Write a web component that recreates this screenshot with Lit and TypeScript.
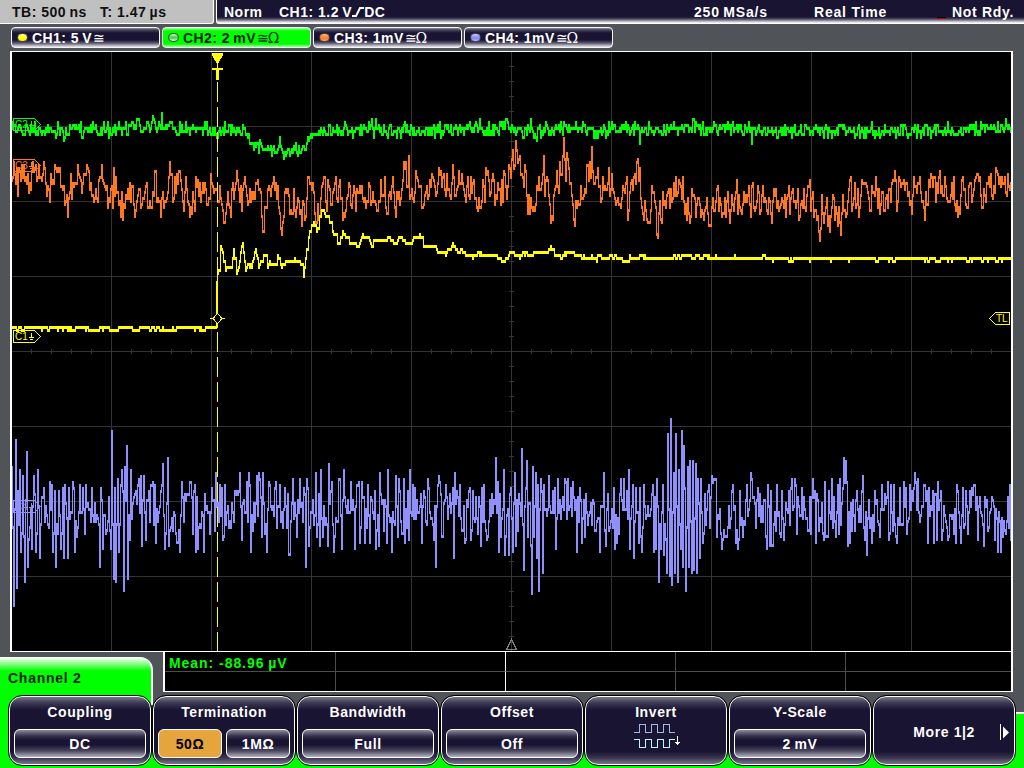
import { LitElement, css, html, svg } from "lit";
import { customElement, property } from "lit/decorators.js";
import { classMap } from "lit/directives/class-map.js";

// A block of extremes: origin in screen pixels, then x,y pairs in thirds of a pixel.
type Block = [number, number, string];

interface TraceOptions {
  base: number;
  // 0 follows the line between two extremes, 1 falls back to the base level
  pull: number;
  noise: number;
  hold: number;
  seed: number;
}

const LEFT = 12;
const RIGHT = 1011;

const CH1: Block[] = [
  [0, 90, "36,714 648,714 651,576 654,550 660,540 663,465 669,490 678,540 684,530 696,530 704,474 713,550 720,510 729,455 740,540 747,518 756,535 768,474 778,530 793,492 806,530 812,514 822,520 834,492 846,530 858,514 900,514 912,558 920,500 930,425 943,400 953,423 968,358 980,374 988,374 1000,425 1014,458"],
  [340, 90, "0,458 10,420 18,440 30,457 45,455 56,466 68,440 80,438 98,466 108,448 155,448 163,457 175,448 190,448 200,457 216,457 230,438 243,438 256,472 264,466 288,466 294,486 318,494 326,475 345,466 356,484 368,480 378,494 400,500 410,492 465,494 476,502 495,511 510,484 540,500 552,486 570,494 600,490 606,484 625,482 634,472 645,492 665,502 675,490 720,494 730,502 820,502 850,510 870,496 890,508 905,492 920,502 1018,498"],
  [680, 90, "0,502 30,493 36,502 300,505 600,506 800,505 992,506"],
];

const CH2: Block[] = [
  [0, 90, "36,118 190,122 195,145 200,118 330,118 420,106 455,112 462,85 468,115 483,112 486,66 489,112 520,118 640,118 655,145 660,118 735,118 752,155 765,160 790,178 822,166 826,190 838,170 840,138 844,172 858,198 864,175 872,198 878,175 910,172 930,140 970,128 1000,118"],
  [340, 90, "0,120 92,115 96,84 99,118 105,115 108,84 111,118 168,120 171,145 174,118 180,120 183,145 186,112 260,118 490,115 500,84 508,112 548,120 551,145 555,118 568,112 573,84 578,118 588,120 590,145 594,118 700,112 740,120 765,122 768,145 772,122 890,118 897,118 900,163 903,120 1018,116"],
  [680, 90, "0,112 214,115 217,155 220,118 334,118 337,145 340,118 442,118 445,145 448,118 550,122 584,122 587,145 590,122 720,120 723,145 726,120 992,114"],
];

const CH3: Block[] = [
  [0, 90, "38,270 42,220 50,280 57,235 66,225 78,262 91,280 100,212 110,225 115,262 133,220 148,298 156,280 169,237 178,245 190,298 200,334 210,306 213,255 226,280 234,228 246,306 252,255 264,237 276,318 288,300 296,334 308,228 320,300 330,334 348,264 360,334 375,352 384,300 400,290 409,362 420,300 432,325 440,290 447,352 456,352 468,247 475,325 492,352 507,264 516,255 519,330 541,247 550,334 560,264 567,343 585,362 590,264 604,330 615,282 624,343 636,282 645,300 654,334 660,290 666,343 678,370 684,310 693,380 701,282 713,247 720,330 738,290 744,343 758,310 774,273 788,380 798,352 805,300 828,282 840,370 849,398 858,300 870,372 882,300 888,380 894,325 903,362 912,343 917,390 927,264 936,300 945,372 953,398 960,380 968,290 978,330 985,273 996,343 1005,282 1014,334"],
  [340, 90, "0,273 6,325 12,370 17,380 29,282 37,352 45,310 49,362 60,290 70,325 78,352 87,282 93,343 108,343 117,334 123,273 132,316 147,316 159,264 165,352 175,325 186,300 195,237 201,290 207,201 210,320 222,334 231,262 240,290 253,343 264,325 276,255 290,316 300,255 310,264 318,316 330,316 343,264 345,316 354,290 368,255 378,334 386,262 390,325 403,273 408,325 421,352 432,290 444,246 455,310 462,273 470,316 475,282 490,334 497,255 503,325 507,228 516,207 520,183 524,237 528,156 538,210 543,255 552,290 558,246 566,372 575,320 579,362 585,362 596,300 610,255 613,201 617,318 621,264 630,343 637,380 648,290 651,246 657,306 661,219 666,255 672,147 678,273 682,192 688,237 693,282 700,340 705,408 711,355 720,343 725,292 735,300 741,228 747,270 756,174 762,282 768,262 774,237 786,325 790,262 800,300 807,237 811,318 817,255 822,310 831,334 843,352 855,310 862,264 865,390 870,310 882,264 888,282 891,219 900,237 905,325 913,390 918,362 925,398 936,292 945,330 951,434 960,335 963,390 972,340 978,352 987,300 990,352 995,300 1005,316 1018,273"],
  [680, 90, "0,282 9,264 12,334 18,345 27,370 33,380 36,300 50,380 54,325 68,362 73,390 81,325 85,372 93,408 99,325 108,334 114,290 118,362 132,372 140,380 144,308 150,398 156,318 162,362 170,310 180,352 195,334 204,318 213,380 216,290 225,362 234,290 243,360 248,318 262,362 270,330 275,372 285,318 300,355 306,325 318,380 327,290 330,370 340,300 348,352 354,300 360,380 374,300 380,362 387,290 393,362 400,310 407,362 417,425 423,416 427,318 433,398 440,355 450,425 456,355 465,390 470,355 480,398 486,370 491,318 500,380 507,300 514,264 517,362 525,282 530,352 540,352 547,273 560,275 572,362 580,310 589,264 600,370 607,310 612,362 624,350 631,300 648,273 651,362 660,273 673,273 685,315 697,372 704,264 712,310 722,264 733,352 741,345 749,273 760,290 770,334 777,264 784,310 795,264 808,334 822,264 828,362 838,352 849,264 860,345 870,275 880,318 888,264 900,264 904,318 918,334 927,264 940,325 954,255 965,290 975,264 980,310 985,255 991,300"],
];

const CH4: Block[] = [
  [0, 400, "37,198 42,612 48,117 51,558 60,207 63,450 69,225 75,540 81,153 85,495 96,441 102,225 108,450 114,207 120,468 132,262 156,252 159,450 169,495 183,441 189,262 192,468 195,252 204,468 207,262 222,262 225,450 240,252 276,262 301,495 304,262 309,441 333,441 338,90 342,530 345,262 348,540 354,234 357,450 366,207 372,567 375,198 381,135 384,530 393,207 423,225 426,432 433,225 456,252 467,252 470,423 489,189 495,441 504,171 507,432 541,450 546,243 585,252 589,450 612,450 636,262 666,262 669,414 720,216 747,216 753,450 771,225 777,216 789,216 801,450 807,243 828,243 840,252 870,459 879,234 901,234 918,495 923,234 927,432 949,216 960,432 963,207 984,432 987,189 998,243 1002,450 1018,234"],
  [340, 400, "0,234 6,441 14,207 33,243 45,441 51,252 75,423 85,252 90,423 105,270 108,441 117,432 122,216 141,423 144,207 157,450 168,225 177,234 192,234 195,423 207,414 210,207 219,252 246,423 253,270 265,234 289,495 294,252 339,262 342,468 345,216 360,252 375,423 387,270 423,432 426,262 434,252 441,414 456,279 469,171 477,450 492,207 495,459 507,459 513,262 519,450 525,216 529,432 546,144 553,504 561,180 576,576 579,198 588,216 591,468 594,252 597,567 603,234 609,513 612,252 627,225 648,441 654,234 675,234 685,234 699,243 711,450 720,262 781,450 794,216 798,432 825,441 831,423 843,234 853,234 867,207 870,441 879,252 882,468 890,262 906,450 912,252 948,441 951,234 957,540 963,441 969,252 972,459 981,513 985,99 990,522 993,54 997,549 1002,216 1005,513 1009,99 1014,540 1018,207"],
  [680, 400, "3,441 6,90 9,500 13,135 18,567 24,198 27,495 30,180 36,513 39,180 42,504 48,189 51,513 54,234 60,468 63,234 69,423 87,252 96,225 108,234 111,405 129,414 138,405 159,252 169,423 177,414 180,270 189,405 201,252 213,216 217,234 234,262 262,441 265,252 270,432 306,270 312,414 337,234 348,252 351,396 366,262 399,234 405,270 409,423 444,405 447,270 469,405 474,252 481,234 492,171 498,180 504,432 510,423 531,270 549,225 561,459 577,423 606,252 625,243 628,414 633,252 642,252 651,423 660,262 673,243 681,396 690,252 714,234 732,252 741,270 745,423 759,270 762,423 771,414 774,243 786,414 804,414 829,423 832,252 843,423 849,262 864,396 882,252 894,414 912,432 915,290 938,290 963,450 978,396 984,290"],
];

function random(seed: number) {
  let s = seed;
  return () => {
    s = (s * 1664525 + 1013904223) >>> 0;
    return s / 4294967296;
  };
}

function tracePath(blocks: Block[], { base, pull, noise, hold, seed }: TraceOptions) {
  const rand = random(seed);
  const keys = new Map<number, number>();
  for (const [ox, oy, text] of blocks) {
    for (const pair of text.split(" ")) {
      const [x, y] = pair.split(",").map(Number);
      keys.set(Math.floor(ox + x / 3), oy + y / 3);
    }
  }
  const xs = [...keys.keys()].sort((a, b) => a - b);
  const levels: number[] = [];
  let k = 0;
  for (let x = LEFT; x <= RIGHT; x++) {
    while (k < xs.length - 2 && xs[k + 1] <= x) k++;
    const t = Math.max(0, Math.min(1, (x - xs[k]) / (xs[k + 1] - xs[k])));
    const line = keys.get(xs[k])! * (1 - t) + keys.get(xs[k + 1])! * t;
    let y = keys.get(x);
    if (y === undefined) {
      const jitter = (rand() + rand() - 1) * noise;
      y = line * (1 - pull) + base * pull + jitter;
      // the screen holds some samples for two columns
      if (rand() < hold && levels.length && !keys.has(x - 1)) y = levels[levels.length - 1];
    }
    levels.push(base + Math.round((y - base) / 3) * 3);
  }
  let d = "";
  for (let i = 0; i < levels.length - 1; i++) {
    const top = Math.min(levels[i], levels[i + 1]);
    const bottom = Math.max(levels[i], levels[i + 1]);
    d += `M${LEFT + i} ${top - 1}h1V${bottom + 2}h-1z`;
  }
  return d;
}

const TRACES = [
  { color: "#9090fc", d: tracePath(CH4, { base: 512, pull: 0.8, noise: 36, hold: 0.06, seed: 41 }) },
  { color: "#ff7820", d: tracePath(CH3, { base: 195, pull: 0.1, noise: 20, hold: 0.06, seed: 7 }) },
  { color: "#00ff00", d: tracePath(CH2, { base: 128, pull: 0, noise: 9, hold: 0.12, seed: 19 }) },
  { color: "#ffff00", d: tracePath(CH1, { base: 327, pull: 0, noise: 2.4, hold: 0.5, seed: 3 }) },
];

const TAGS = [
  { name: "C2", y: 118, color: "#00ff00" },
  { name: "C3", y: 159, color: "#ff7820" },
  { name: "C1", y: 330, color: "#ffff00" },
  { name: "C4", y: 500, color: "#9090fc" },
];

@customElement("scope-screen")
export class ScopeScreen extends LitElement {
  static styles = css`
    :host {
      display: block;
    }

    svg {
      display: block;
      shape-rendering: crispEdges;
    }

    .grid {
      stroke: #343434;
      fill: none;
    }

    .yellow-line {
      stroke: #ffff00;
      fill: none;
    }

    .tag {
      fill: none;
    }

    text {
      font: 10px "Liberation Sans", Arial, sans-serif;
    }
  `;

  renderGrid() {
    let d = "";
    for (let x = 111; x < 1000; x += 100) d += `M${x + 0.5} 52V651`;
    for (let y = 126; y < 600; y += 75) d += `M12 ${y + 0.5}H1011`;
    for (let x = 31; x < 1010; x += 20) d += `M${x + 0.5} 349v5`;
    for (let y = 66; y < 650; y += 15) d += `M509 ${y + 0.5}h5`;
    return svg`<path class="grid" d=${d} />`;
  }

  render() {
    return html`
      <svg width="999" height="599" viewBox="12 52 999 599">
        ${this.renderGrid()}
        ${TRACES.map((trace) => svg`<path fill=${trace.color} d=${trace.d} />`)}
        ${TAGS.map(
          (tag) => svg`
            <path class="tag" stroke=${tag.color} d="M13.5 ${tag.y + 0.5}h21l6 6l-6 6h-21z" />
            <text x="15" y=${tag.y + 10} fill=${tag.color}>${tag.name}</text>
            <path class="tag" stroke=${tag.color} d="M31.5 ${tag.y + 3}v5M29 ${tag.y + 7.5}h5M30 ${tag.y + 9.5}h3" />
          `,
        )}
        <path class="yellow-line" stroke-dasharray="20 5" d="M217.5 82V651" />
        <path class="yellow-line" d="M217.5 272V328M217.5 62v8" />
        <path fill="#ffff00" d="M212 53h11v2l-5 9h-1l-5-9zM212 68h11v2h-4v10h-3v-10h-4z" />
        <path fill="#000" stroke="#ffff00" d="M217.5 313.5l4.5 5l-4.5 5l-4.5-5z" />
        <path class="yellow-line" d="M210 318.5h3M222 318.5h3" />
        <path class="yellow-line" d="M1009.5 312.5h-14l-6 6l6 6h14z" />
        <text x="996" y="322" fill="#ffff00">TL</text>
        <path fill="none" stroke="#808080" d="M511.5 639.5l5 10h-10z" />
      </svg>
    `;
  }
}

@customElement("channel-badge")
export class ChannelBadge extends LitElement {
  @property()
  label = "";

  @property()
  symbols = "";

  @property({ type: Boolean, reflect: true })
  active = false;

  @property()
  color = "yellow";

  static styles = css`
    :host {
      display: flex;
      align-items: center;
      box-sizing: border-box;
      width: 149px;
      height: 21px;
      padding-left: 5px;
      border: 1px solid #f4f4f4;
      border-radius: 4px;
      color: #fff;
      background: linear-gradient(#8e8c9c 0, #45425a 2px, #191432 5px, #191432 12px, #5a566c 15px, #e8e8ee 19px);
    }

    :host([active]) {
      color: #002000;
      background: linear-gradient(#a0ffa0 0, #00ff00 3px, #00ff00 16px, #a0ffa0 19px);
    }

    .led {
      box-sizing: border-box;
      width: 11px;
      height: 9px;
      border: 1px solid #444;
      border-radius: 5px;
      margin-right: 4px;
    }

    .yellow {
      background: linear-gradient(#ffff90, #ffff00 60%, #f0e040);
    }

    .green {
      border-color: #205020;
      background: linear-gradient(#d0f0d0, #50c850 50%, #d0f8d0);
    }

    .orange {
      background: linear-gradient(#ffb080, #ff7820 60%, #ffa060);
    }

    .blue {
      background: linear-gradient(#c8c8ff, #8080ff 60%, #b8b8ff);
    }

    .label {
      letter-spacing: 0.45px;
      white-space: pre;
    }

    .symbols {
      margin-left: 1px;
      font: 14px "DejaVu Serif", serif;
      letter-spacing: -1.2px;
    }
  `;

  render() {
    return html`
      <span class=${classMap({ led: true, [this.color]: true })}></span>
      <span class="label">${this.label}</span>
      <span class="symbols">${this.symbols}</span>
    `;
  }
}

@customElement("soft-key")
export class SoftKey extends LitElement {
  @property()
  label = "";

  @property({ type: Array })
  values: string[] = [];

  @property({ type: Number })
  selected = -1;

  static styles = css`
    :host {
      display: flex;
      flex-direction: column;
      box-sizing: border-box;
      width: 142px;
      height: 69px;
      padding: 7px 4px 6px;
      border: 1px solid #fff;
      outline: 1px solid #000;
      border-radius: 13px;
      color: #fff;
      background: linear-gradient(#77758a 0, #3c3852 6px, #191432 13px, #191432 55px, #3c3852 61px, #77758a 67px);
      text-align: center;
      letter-spacing: 0.6px;
      line-height: 16px;
    }

    .label {
      height: 16px;
    }

    .values {
      display: flex;
      gap: 4px;
      margin-top: 9px;
    }

    .value {
      flex: 1;
      box-sizing: border-box;
      height: 29px;
      padding-top: 6px;
      border: 1px solid #fff;
      border-radius: 6px;
      background: linear-gradient(#8c8a9c 0, #35314b 6px, #191432 10px, #191432 15px, #4c4860 21px, #b4b2be 27px);
      white-space: pre;
    }

    .value.selected {
      color: #000;
      background: #e6a43c;
    }
  `;

  render() {
    return html`
      <div class="label">${this.label}</div>
      ${this.values.length
        ? html`<div class="values">
            ${this.values.map(
              (value, i) => html`<div class=${classMap({ value: true, selected: i === this.selected })}>${value}</div>`,
            )}
          </div>`
        : html`<slot></slot>`}
    `;
  }
}

@customElement("app-root")
export class AppRoot extends LitElement {
  static styles = css`
    :host {
      display: flex;
      flex-direction: column;
      width: 1024px;
      height: 768px;
      overflow: hidden;
      background: #505458;
      font: bold 14px "Liberation Sans", Arial, sans-serif;
      color: #fff;
    }

    .status {
      display: flex;
      gap: 2px;
      height: 24px;
      line-height: 24px;
      letter-spacing: 0.5px;
      white-space: pre;
    }

    .timebase {
      display: grid;
      grid-template-columns: 88px auto;
      box-sizing: border-box;
      width: 214px;
      padding-left: 12px;
      border-right: 1px solid #fff;
      border-bottom: 1px solid #fff;
      border-bottom-right-radius: 3px;
      color: #101010;
      background: #c0c0c0;
    }

    .trigger {
      flex: 1;
      display: grid;
      grid-template-columns: 55px 415px 120px 123px auto;
      padding-left: 7px;
      border-left: 1px solid #fff;
      border-bottom: 1px solid #fff;
      border-bottom-left-radius: 3px;
      background: linear-gradient(#191432 17px, #4c4860 19px, #a8a6b4 21px, #fff 23px);
    }

    .wide {
      letter-spacing: 0.8px;
    }

    .edge {
      margin: 0 -1px 0 0;
    }

    .ready {
      display: flex;
      gap: 6px;
      letter-spacing: 0.7px;
    }

    .lamp {
      width: 9px;
      height: 1px;
      margin-top: 17px;
      border-top: 1px solid #000;
      background: #c00000;
    }

    .channels {
      display: flex;
      gap: 2px;
      height: 21px;
      padding: 3px 0 3px 11px;
    }

    .screen {
      width: 999px;
      height: 599px;
      margin-left: 10px;
      border: solid #fff;
      border-width: 1px 2px;
      background: #000;
    }

    .info {
      display: flex;
      gap: 10px;
      height: 43px;
    }

    .title {
      box-sizing: border-box;
      width: 153px;
      margin-top: 5px;
      padding: 13px 0 0 8px;
      border-right: 2px solid #fff;
      border-top-right-radius: 13px;
      color: #002000;
      background: linear-gradient(#fff 0, #d0ffd0 3px, #00ff00 14px);
      letter-spacing: 0.75px;
    }

    .measures {
      display: grid;
      grid-template-columns: 171px 170px 170px 170px 165px;
      grid-template-rows: 20px 19px;
      width: 846px;
      height: 39px;
      border: solid #fff;
      border-width: 0 2px 1px;
      background: #000;
      color: #00ff00;
      letter-spacing: 0.95px;
      white-space: pre;
    }

    .cell {
      box-sizing: border-box;
      border-right: 1px solid #4c4c4c;
    }

    .cell:nth-child(5n) {
      border-right: none;
    }

    .cell:nth-child(5n + 2) {
      border-right-color: #fff;
    }

    .cell:nth-child(-n + 5) {
      border-bottom: 1px solid #4c4c4c;
    }

    .cell:first-child {
      padding: 3px 0 0 4px;
      line-height: 16px;
    }

    .menu {
      flex: 1;
      display: flex;
      gap: 2px;
      padding: 1px 0 0 9px;
      background:
        linear-gradient(#00ff00, #00ff00) 0 0 / 151px 73px no-repeat,
        linear-gradient(#fff, #fff) 151px 0 / 2px 10px no-repeat,
        linear-gradient(transparent 17px, #fff 17px, #fff 19px, transparent 19px) 1015px 0 / 9px 73px no-repeat,
        linear-gradient(#00ff00, #00ff00) 1015px 19px / 9px 54px no-repeat,
        linear-gradient(transparent 50px, #00ff00 50px);
    }

    .wave {
      display: block;
      margin: 3px 0 0 44px;
    }

    .more {
      display: flex;
      align-items: center;
      justify-content: flex-end;
      gap: 25px;
      height: 24px;
    }
  `;

  render() {
    return html`
      <div class="status">
        <div class="timebase"><span>TB: 500\u2009ns</span><span>T: 1.47\u2009µs</span></div>
        <div class="trigger">
          <span>Norm</span>
          <span>CH1: 1.2\u2009V<svg class="edge" width="13" height="10" viewBox="0 0 13 10">
              <path d="M0 9h4l4-8h4" fill="none" stroke="#fff" stroke-width="2" /></svg>DC</span>
          <span class="wide">250\u2009MSa/s</span>
          <span class="wide">Real Time</span>
          <span class="ready"><i class="lamp"></i>Not Rdy.</span>
        </div>
      </div>

      <div class="channels">
        <channel-badge color="yellow" label="CH1: 5\u2009V" symbols="≅"></channel-badge>
        <channel-badge color="green" label="CH2: 2\u2009mV" symbols="≅Ω" active></channel-badge>
        <channel-badge color="orange" label="CH3: 1mV" symbols="≅Ω"></channel-badge>
        <channel-badge color="blue" label="CH4: 1mV" symbols="≅Ω"></channel-badge>
      </div>

      <scope-screen class="screen"></scope-screen>

      <div class="info">
        <div class="title">Channel 2</div>
        <div class="measures">
          <div class="cell">Mean: -88.96\u2009µV</div>
          ${Array.from({ length: 9 }, () => html`<div class="cell"></div>`)}
        </div>
      </div>

      <div class="menu">
        <soft-key label="Coupling" .values=${["DC"]}></soft-key>
        <soft-key label="Termination" .values=${["50Ω", "1MΩ"]} .selected=${0}></soft-key>
        <soft-key label="Bandwidth" .values=${["Full"]}></soft-key>
        <soft-key label="Offset" .values=${["Off"]}></soft-key>
        <soft-key label="Invert">
          <svg class="wave" width="50" height="26" viewBox="0 0 50 26" fill="none" shape-rendering="crispEdges">
            <path d="M0 9.5h5.5v-8h6v8h6v-8h6v8h6v-8h6v8h5" stroke="#a0b8e8" />
            <path d="M0 16.5h5.5v8h6v-8h6v8h6v-8h6v8h6v-8h5" stroke="#c0f4ff" />
            <path d="M43.5 13v9M41 19.5h5M42 20.5h3" stroke="#fff" />
          </svg>
        </soft-key>
        <soft-key label="Y-Scale" .values=${["2\u2009mV"]}></soft-key>
        <soft-key>
          <div class="more">
            <span>More 1|2</span>
            <svg width="10" height="17" viewBox="0 0 10 17">
              <path d="M0.5 0v16" stroke="#fff" />
              <path d="M3 2.5v12l6-6z" fill="#fff" />
            </svg>
          </div>
        </soft-key>
      </div>
    `;
  }
}
